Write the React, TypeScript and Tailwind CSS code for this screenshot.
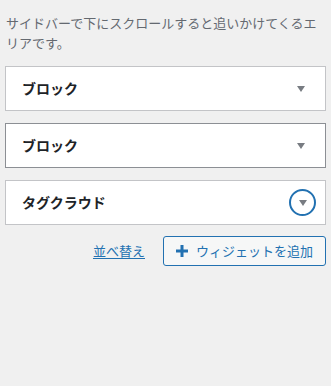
import React from 'react';

const widgets = [
  { title: 'ブロック', border: 'border-[#c3c4c7]', focus: false },
  { title: 'ブロック', border: 'border-[#8c8f94]', focus: false },
  { title: 'タグクラウド', border: 'border-[#c3c4c7]', focus: true },
];

function Caret() {
  return (
    <svg width="10" height="6" viewBox="0 0 10 6">
      <path d="M1 0 L9 0 L5 6 Z" fill="#787c82" />
    </svg>
  );
}

export default function App() {
  const font = { fontFamily: '"Noto Sans CJK JP", "Noto Sans", sans-serif' };

  return (
    <div className="min-h-[386px] w-[331px] bg-[#f0f0f0] px-[5px] pt-[13px]" style={font}>
      <p className="pl-[1px] text-[13px] leading-[20px] text-[#646970]">
        サイドバーで下にスクロールすると追いかけてくるエリアです。
      </p>

      <div className="mt-[13px] flex flex-col gap-[12px]">
        {widgets.map((w, i) => (
          <div
            key={i}
            className={`flex h-[45px] items-center justify-between border bg-white pl-[16px] pr-[11px] ${w.border}`}
          >
            <span className="text-[14px] font-bold text-[#1d2327]">{w.title}</span>
            {w.focus ? (
              <span className="-mr-[2px] flex h-[27px] w-[27px] items-center justify-center rounded-full border-2 border-[#2271b1]">
                <Caret />
              </span>
            ) : (
              <span className="flex h-[26px] w-[26px] items-center justify-center">
                <Caret />
              </span>
            )}
          </div>
        ))}
      </div>

      <div className="mt-[11px] flex items-center justify-end gap-[18px]">
        <a href="#" className="text-[13px] text-[#2271b1] underline underline-offset-2">
          並べ替え
        </a>
        <button className="flex h-[30px] w-[163px] items-center gap-[7px] rounded-[3px] border border-[#2271b1] bg-[#f6f7f7] pl-[11px] text-[13px] text-[#2271b1]">
          <svg width="14" height="14" viewBox="0 0 14 14">
            <path d="M7 1 V13 M1 7 H13" stroke="#2271b1" strokeWidth="3" />
          </svg>
          ウィジェットを追加
        </button>
      </div>
    </div>
  );
}
